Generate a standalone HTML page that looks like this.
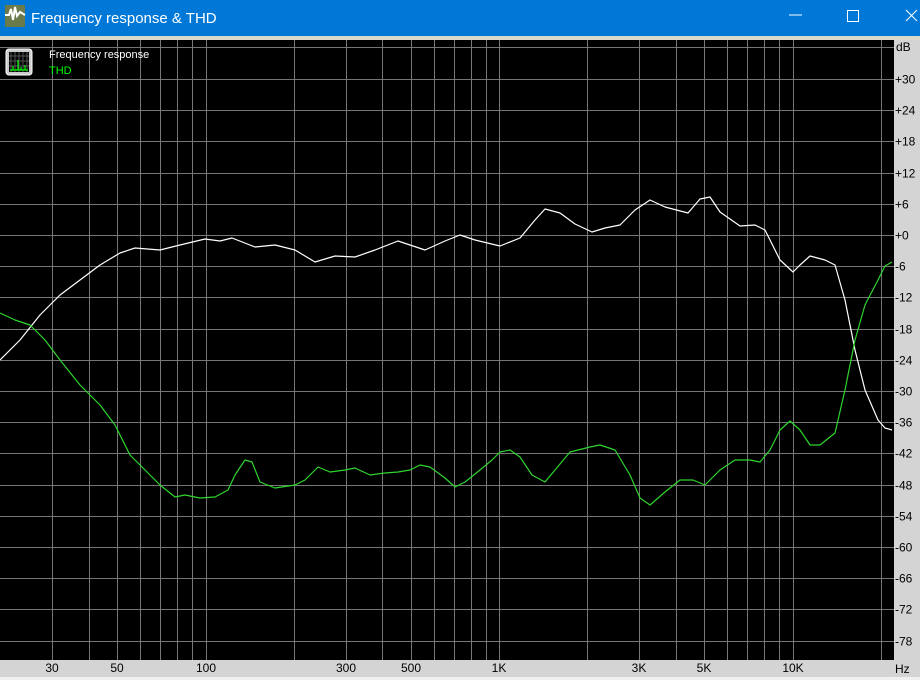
<!DOCTYPE html><html><head><style>body{margin:0;width:920px;height:680px;overflow:hidden;background:#d4d4d4;font-family:"Liberation Sans",sans-serif}</style></head><body>
<svg width="920" height="680" xmlns="http://www.w3.org/2000/svg" style="display:block">
<rect x="0" y="0" width="920" height="36" fill="#0078d7"/>
<rect x="0" y="36" width="920" height="4" fill="#d9d9cc"/>
<rect x="5" y="5" width="20" height="22" fill="#6b7a4a"/>
<path d="M5 15 L9 15 L11 9 L13 20 L15 7 L17 16 L20 12 L25 15" stroke="#fff" stroke-width="2" fill="none"/>
<text x="31" y="23" font-size="15" fill="#fff">Frequency response &amp; THD</text>
<line x1="789" y1="15" x2="802" y2="15" stroke="#fff" stroke-width="1"/>
<rect x="847.5" y="10.5" width="11" height="11" fill="none" stroke="#fff"/>
<path d="M906 10 L917 21 M917 10 L906 21" stroke="#fff"/>
<rect x="0" y="40" width="894" height="620" fill="#000"/>
<g stroke="#777" stroke-width="1" id="g"></g>
<g font-size="12" fill="#000" id="lab"></g>
<rect x="0" y="677" width="920" height="3" fill="#f0f0f0"/>
<rect x="6" y="49" width="26" height="26" rx="3" fill="#ccc" stroke="#fff"/>
<rect x="9" y="52" width="20" height="20" fill="#000"/>
<path d="M11 52v20M15 52v20M19 52v20M23 52v20M27 52v20M9 56h20M9 61h20M9 66h20" stroke="#555" stroke-width="1"/>
<path d="M10 70h18M13 70v-4M18 70v-10M21 70v-3M25 70v-5" stroke="#0f0" stroke-width="1.2"/>
<text x="49" y="58" font-size="11" fill="#fff">Frequency response</text>
<text x="49" y="74" font-size="11" fill="#0f0">THD</text>
<polyline fill="none" stroke="#fff" stroke-width="1.2" stroke-linejoin="round" points="0,360 20,340 40,315 60,295 80,280 100,265 120,253 135,248 160,250 180,245 205,239 220,241 232,238 255,247 275,245 295,250 315,262 335,256 355,257 375,250 398,241 425,250 445,241 460,235 475,240 500,246 520,238 535,220 545,209 560,213 575,224 592,232 605,228 620,225 635,210 650,200 665,207 688,213 700,199 710,197 720,212 740,226 755,225 765,230 780,260 793,272 800,265 810,256 825,260 835,265 845,300 855,350 865,390 878,420 885,428 892,430"/>
<polyline fill="none" stroke="#2ed52e" stroke-width="1.2" stroke-linejoin="round" points="0,313 15,320 30,325 45,340 60,360 80,385 100,405 115,425 130,455 145,470 160,485 175,497 185,495 200,498 215,497 228,490 235,475 245,460 252,462 260,482 275,488 295,485 305,480 318,467 330,472 345,470 355,468 370,475 385,473 398,472 410,470 420,465 430,467 445,478 455,487 465,482 480,470 492,460 500,452 510,450 520,457 532,475 545,482 555,470 570,452 590,447 600,445 615,450 630,475 640,498 650,505 665,492 680,480 693,480 705,485 720,470 735,460 750,460 760,462 770,450 780,430 790,421 800,430 810,445 820,445 835,433 845,390 855,340 865,305 878,280 885,266 892,262"/>
</svg>
<script>
var ns="http://www.w3.org/2000/svg",g=document.getElementById('g'),lab=document.getElementById('lab');
function L(a,b,c,d){var l=document.createElementNS(ns,'line');l.setAttribute('x1',a);l.setAttribute('y1',b);l.setAttribute('x2',c);l.setAttribute('y2',d);g.appendChild(l);}
function T(x,y,s,anc){var t=document.createElementNS(ns,'text');t.setAttribute('x',x);t.setAttribute('y',y);if(anc)t.setAttribute('text-anchor',anc);t.textContent=s;lab.appendChild(t);}
[20,30,40,50,60,70,80,90,100,200,300,400,500,600,700,800,900,1000,2000,3000,4000,5000,6000,7000,8000,9000,10000,20000].forEach(function(f){var x=Math.round(499+293.5*Math.log10(f/1000))+0.5;if(x>1&&x<894)L(x,40,x,660);});
L(0,47.5,894,47.5);
for(var v=30;v>=-78;v-=6){var y=Math.round(235-5.2*v)+0.5;L(0,y,894,y);T(895,y+4,(v>=0?'+':'')+v);}
T(896,51,'dB');
[[30,'30'],[50,'50'],[100,'100'],[300,'300'],[500,'500'],[1000,'1K'],[3000,'3K'],[5000,'5K'],[10000,'10K']].forEach(function(p){T(Math.round(499+293.5*Math.log10(p[0]/1000)),672,p[1],'middle');});
T(895,673,'Hz');
</script>
</body></html>
